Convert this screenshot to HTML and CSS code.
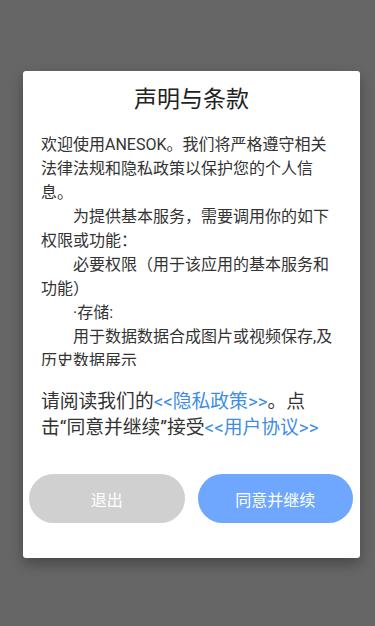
FILE: index.html
```html
<!DOCTYPE html>
<html lang="zh-CN">
<head>
<meta charset="utf-8">
<meta name="viewport" content="width=device-width, initial-scale=1">
<title>声明与条款</title>
<link rel="stylesheet" href="styles.css">
</head>
<body>
<div class="dialog">
  <h1 class="title">声明与条款</h1>
  <div class="scroll">
    <p class="para">欢迎使用ANESOK。我们将严格遵守相关法律法规和隐私政策以保护您的个人信息。</p>
    <p class="para">　　为提供基本服务，需要调用你的如下权限或功能：</p>
    <p class="para">　　必要权限（用于该应用的基本服务和功能）</p>
    <p class="para">　　·存储:</p>
    <p class="para">　　用于数据数据合成图片或视频保存,及历史数据展示</p>
  </div>
  <p class="agree">请阅读我们的<a class="link">&lt;&lt;隐私政策&gt;&gt;</a>。点击“同意并继续”接受<a class="link">&lt;&lt;用户协议&gt;&gt;</a></p>
  <div class="actions">
    <button class="btn btn-exit">退出</button>
    <button class="btn btn-ok">同意并继续</button>
  </div>
</div>
</body>
</html>
```

FILE: styles.css
```css
html, body {
  margin: 0;
  padding: 0;
}
body {
  background: #666666;
  height: 626px;
  padding-top: 71px;
  box-sizing: border-box;
  font-family: "Roboto", "Noto Sans CJK SC", sans-serif;
  overflow: hidden;
}
.dialog {
  margin-left: 23px;
  width: 337px;
  background: #ffffff;
  border-radius: 3px;
  box-shadow: 0 6px 14px rgba(0, 0, 0, 0.3);
  padding-bottom: 35px;
}
.title {
  margin: 0;
  padding-top: 14px;
  font-size: 23px;
  line-height: 30px;
  font-weight: normal;
  color: #222222;
  text-align: center;
}
.scroll {
  margin-top: 18px;
  height: 233px;
  overflow: hidden;
  padding: 0 18px;
}
.para {
  margin: 0;
  font-size: 16px;
  line-height: 24px;
  color: #333333;
}
.agree {
  margin: 23px 0 0;
  padding: 0 38px 0 18px;
  font-size: 18.8px;
  line-height: 26px;
  color: #333333;
}
.link {
  color: #3d8de4;
  text-decoration: none;
}
.actions {
  display: flex;
  gap: 13px;
  margin-top: 33px;
  padding: 0 7px 0 6px;
}
.btn {
  flex: 1;
  height: 49px;
  border: none;
  border-radius: 25px;
  color: #ffffff;
  font-family: "Roboto", "Noto Sans CJK SC", sans-serif;
  font-size: 16px;
  padding: 0;
}
.btn-exit {
  background: #d0d0d0;
}
.btn-ok {
  background: #6fa7ff;
}
```
